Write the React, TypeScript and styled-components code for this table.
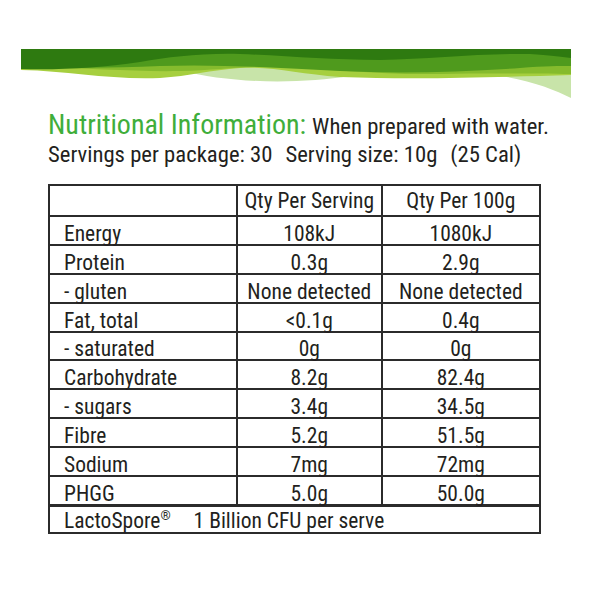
import styled, { createGlobalStyle } from 'styled-components';

const GlobalStyle = createGlobalStyle`
    body {
        margin: 0;
        background: #ffffff;
        font-family: Roboto, 'Liberation Sans', sans-serif;
        font-stretch: 80%;
        color: #231f20;
    }
`;

const Page = styled.div`
    width: 600px;
    height: 600px;
    padding-top: 49px;
    box-sizing: border-box;
    overflow: hidden;
`;

const Banner = styled.svg`
    display: block;
    margin-left: 21px;
`;

const Content = styled.div`
    padding-left: 48px;
    margin-top: 12px;
`;

const Heading = styled.div`
    font-size: 22.7px;
    line-height: 28px;
    white-space: nowrap;
    .title {
        color: #3fae3b;
        font-size: 28px;
        font-stretch: 86%;
        margin-right: 6px;
    }
`;

const Servings = styled.div`
    font-size: 22.7px;
    line-height: 28px;
    white-space: nowrap;
`;

const Part = styled.span<{ $gap: number }>`
    margin-left: ${(p) => p.$gap}px;
`;

const Table = styled.table`
    margin-top: 15px;
    border-collapse: collapse;
    border: 2px solid #2b2b2b;
    width: 493px;
    font-size: 21.5px;
    line-height: 21px;
`;

const Cell = styled.td<{ $center?: boolean; $head?: boolean }>`
    border: 2px solid #2b2b2b;
    height: ${(p) => (p.$head ? '25px' : '26.9px')};
    padding: ${(p) => (p.$head ? '0 0 4px 0' : '0')};
    padding-left: ${(p) => (p.$center ? '0' : '14px')};
    vertical-align: bottom;
    text-align: ${(p) => (p.$center ? 'center' : 'left')};
    white-space: nowrap;
`;

const FootRow = styled.tr`
    td {
        border-top: 3px solid #2b2b2b;
        height: 24px;
        padding-bottom: 1px;
    }
    sup {
        font-size: 13px;
        vertical-align: 8px;
        line-height: 0;
    }
`;

const rows: [string, string, string][] = [
    ['Energy', '108kJ', '1080kJ'],
    ['Protein', '0.3g', '2.9g'],
    ['- gluten', 'None detected', 'None detected'],
    ['Fat, total', '<0.1g', '0.4g'],
    ['- saturated', '0g', '0g'],
    ['Carbohydrate', '8.2g', '82.4g'],
    ['- sugars', '3.4g', '34.5g'],
    ['Fibre', '5.2g', '51.5g'],
    ['Sodium', '7mg', '72mg'],
    ['PHGG', '5.0g', '50.0g'],
];

function Waves() {
    return (
        <Banner width="550" height="50" viewBox="21 49 550 50">
            <path
                fill="#c8e4a9"
                d="M180 70 C230 84 300 84 350 76 L500 76 C530 80 555 90 571 98 L571 60 L180 60 Z"
            />
            <path
                fill="#a6cf3f"
                d="M21 70 C70 71 110 80 160 78 C190 76 210 70 240 68 C270 66 300 74 340 77 C420 80 500 77 571 75 L571 49 L21 49 Z"
            />
            <path
                fill="#85bb2d"
                d="M21 68 C80 67 130 72 180 71 C220 70 240 66 280 67 C330 69 380 75 440 74 C500 73 540 74 571 74 L571 49 L21 49 Z"
            />
            <path
                fill="#4f9a1d"
                d="M21 68 C60 68 110 68 160 66 C220 64 280 68 340 71 C400 74 460 72 520 68 C545 66 560 66 571 66 L571 49 L21 49 Z"
            />
            <path
                fill="#2e7a10"
                d="M21 69 C60 70 100 68 140 62 C170 57 200 53 240 54 C290 56 330 60 380 60 C430 59 480 53 530 54 C550 55 560 57 571 58 L571 49 L21 49 Z"
            />
        </Banner>
    );
}

function App() {
    return (
        <Page>
            <GlobalStyle />
            <Waves />
            <Content>
                <Heading>
                    <span className="title">Nutritional Information:</span>When prepared with water.
                </Heading>
                <Servings>
                    <span>Servings per package: 30</span>
                    <Part $gap={13}>Serving size: 10g</Part>
                    <Part $gap={13}>(25 Cal)</Part>
                </Servings>
                <Table>
                    <colgroup>
                        <col style={{ width: '189px' }} />
                        <col style={{ width: '145px' }} />
                        <col style={{ width: '159px' }} />
                    </colgroup>
                    <tbody>
                        <tr>
                            <Cell $head />
                            <Cell $head $center>
                                Qty Per Serving
                            </Cell>
                            <Cell $head $center>
                                Qty Per 100g
                            </Cell>
                        </tr>
                        {rows.map(([label, serving, per100]) => (
                            <tr key={label}>
                                <Cell>{label}</Cell>
                                <Cell $center>{serving}</Cell>
                                <Cell $center>{per100}</Cell>
                            </tr>
                        ))}
                        <FootRow>
                            <Cell colSpan={3}>
                                LactoSpore<sup>®</sup>
                                <Part $gap={23}>1 Billion CFU per serve</Part>
                            </Cell>
                        </FootRow>
                    </tbody>
                </Table>
            </Content>
        </Page>
    );
}

export default App;
